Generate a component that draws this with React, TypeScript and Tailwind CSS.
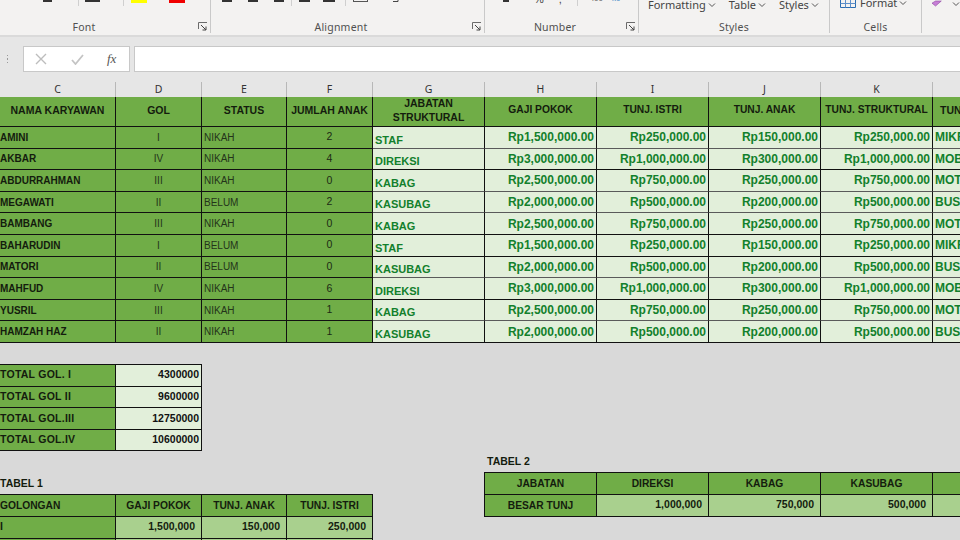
import React from "react";

const font = "font-['Liberation_Sans',Arial,sans-serif]";
const uiFont = "font-['Noto_Sans',sans-serif]";

const rows = [
  ["AMINI", "I", "NIKAH", "2", "STAF", "Rp1,500,000.00", "Rp250,000.00", "Rp150,000.00", "Rp250,000.00", "MIKR"],
  ["AKBAR", "IV", "NIKAH", "4", "DIREKSI", "Rp3,000,000.00", "Rp1,000,000.00", "Rp300,000.00", "Rp1,000,000.00", "MOB"],
  ["ABDURRAHMAN", "III", "NIKAH", "0", "KABAG", "Rp2,500,000.00", "Rp750,000.00", "Rp250,000.00", "Rp750,000.00", "MOT"],
  ["MEGAWATI", "II", "BELUM", "2", "KASUBAG", "Rp2,000,000.00", "Rp500,000.00", "Rp200,000.00", "Rp500,000.00", "BUS"],
  ["BAMBANG", "III", "NIKAH", "0", "KABAG", "Rp2,500,000.00", "Rp750,000.00", "Rp250,000.00", "Rp750,000.00", "MOT"],
  ["BAHARUDIN", "I", "BELUM", "0", "STAF", "Rp1,500,000.00", "Rp250,000.00", "Rp150,000.00", "Rp250,000.00", "MIKR"],
  ["MATORI", "II", "BELUM", "0", "KASUBAG", "Rp2,000,000.00", "Rp500,000.00", "Rp200,000.00", "Rp500,000.00", "BUS"],
  ["MAHFUD", "IV", "NIKAH", "6", "DIREKSI", "Rp3,000,000.00", "Rp1,000,000.00", "Rp300,000.00", "Rp1,000,000.00", "MOB"],
  ["YUSRIL", "III", "NIKAH", "1", "KABAG", "Rp2,500,000.00", "Rp750,000.00", "Rp250,000.00", "Rp750,000.00", "MOT"],
  ["HAMZAH HAZ", "II", "NIKAH", "1", "KASUBAG", "Rp2,000,000.00", "Rp500,000.00", "Rp200,000.00", "Rp500,000.00", "BUS"],
];

const grayRows = [0, 2, 3, 6, 8];
const letters = ["C", "D", "E", "F", "G", "H", "I", "J", "K"];
const colsClass = "grid grid-cols-[116px_86px_85px_86px_112px_112px_112px_112px_112px_112px]";

function Launcher() {
  return (
    <svg width="10" height="10" viewBox="0 0 10 10" fill="none" stroke="#6b6b6b" strokeWidth="1">
      <path d="M0.5 7V0.5H9" />
      <path d="M3 3l5 5M8 4.5V8H4.5" stroke="#444" />
    </svg>
  );
}

function Chevron() {
  return (
    <svg width="8" height="6" viewBox="0 0 8 6" fill="none" stroke="#555" strokeWidth="1" className="shrink-0">
      <path d="M1 1.5l3 3 3-3" />
    </svg>
  );
}

function Mark({ w, ml, h = "h-[2px]", c = "bg-[#333]" }: { w: string; ml: string; h?: string; c?: string }) {
  return <span className={`block ${w} ${ml} ${h} ${c}`} />;
}

function Sep({ ml }: { ml: string }) {
  return <span className={`block w-px h-[6px] bg-[#cfcfcf] ${ml}`} />;
}

function Group({
  label,
  width,
  launcher,
  extra,
  children,
}: {
  label: string;
  width: string;
  launcher?: boolean;
  extra?: string;
  children: React.ReactNode;
}) {
  return (
    <div className={`${width} h-[33px] shrink-0 flex flex-col border-r border-[#c9c9c9]`}>
      <div className="h-[21px] flex items-start overflow-hidden">{children}</div>
      <div className="flex-1 flex items-center">
        <div className={`flex-1 text-center text-[10.5px] leading-[12px] tracking-[0.2px] text-[#505050] ${uiFont} ${extra ?? ""}`}>
          {label}
        </div>
        {launcher ? (
          <div className="mr-[2px] w-[10px] flex">
            <Launcher />
          </div>
        ) : null}
      </div>
    </div>
  );
}

function Ribbon() {
  return (
    <div className="h-[35px] shrink-0 bg-[#f3f2f1] flex overflow-hidden">
      <Group label="Font" width="w-[211px]" launcher extra="pr-[30px]">
        <Mark w="w-[9px]" ml="ml-[43px]" />
        <Sep ml="ml-[26px]" />
        <Mark w="w-[15px]" ml="ml-[6px]" />
        <Sep ml="ml-[23px]" />
        <Mark w="w-[16px]" ml="ml-[7px]" h="h-[3px]" c="bg-[#ffff00]" />
        <Mark w="w-[16px]" ml="ml-[22px]" h="h-[3px]" c="bg-[#f00000]" />
      </Group>
      <Group label="Alignment" width="w-[274px]" launcher extra="pr-[1px]">
        <Mark w="w-[10px]" ml="ml-[11px]" />
        <Mark w="w-[10px]" ml="ml-[16px]" />
        <Mark w="w-[10px]" ml="ml-[16px]" />
        <Sep ml="ml-[7px]" />
        <Mark w="w-[11px]" ml="ml-[7px]" />
        <Mark w="w-[12px]" ml="ml-[13px]" />
        <Sep ml="ml-[10px]" />
        <span className="block ml-[7px] w-[15px] h-[2px] border-x border-b border-[#555]" />
        <svg width="6" height="3" viewBox="0 0 6 3" fill="none" stroke="#444" className="ml-[25px]">
          <path d="M5 0v1.5H0" />
        </svg>
      </Group>
      <Group label="Number" width="w-[154px]" launcher extra="pr-[1px]">
        <Mark w="w-[6px]" ml="ml-[18px]" h="h-[2px]" />
        <span className={`ml-[25px] -mt-[6px] text-[11px] leading-[11px] text-[#444] ${font}`}>%</span>
        <span className={`ml-[15px] -mt-[6px] text-[11px] leading-[11px] text-[#444] ${font}`}>,</span>
        <Sep ml="ml-[15px]" />
        <span className={`ml-[14px] -mt-[6px] text-[8px] leading-[9px] text-[#555] ${font}`}>.00</span>
        <span className={`ml-[9px] -mt-[6px] text-[8px] leading-[9px] text-[#3b83c6] ${font}`}>x0</span>
      </Group>
      <Group label="Styles" width="w-[191px]">
        <div className={`-mt-[1px] flex items-center text-[11px] leading-[11px] text-[#444] ${uiFont}`}>
          <span className="ml-[9px]">Formatting</span>
          <span className="ml-[2px]">
            <Chevron />
          </span>
          <span className="ml-[13px]">Table</span>
          <span className="ml-[2px]">
            <Chevron />
          </span>
          <span className="ml-[13px]">Styles</span>
          <span className="ml-[2px]">
            <Chevron />
          </span>
        </div>
      </Group>
      <Group label="Cells" width="w-[92px]">
        <svg width="16" height="8" viewBox="0 0 16 8" fill="none" className="ml-[10px]">
          <path d="M0.5 0v7.5h15V0" stroke="#2b6cb0" />
          <path d="M5.5 0v7.5M10.5 0v7.5M0.5 3.5h15" stroke="#5d8fc9" />
        </svg>
        <div className={`-mt-[3px] flex items-center text-[11px] leading-[11px] text-[#444] ${uiFont}`}>
          <span className="ml-[4px]">Format</span>
          <span className="ml-[2px]">
            <Chevron />
          </span>
        </div>
      </Group>
      <div className="flex-1 flex items-start overflow-hidden">
        <svg width="14" height="7" viewBox="0 0 14 7" className="ml-[10px]">
          <path d="M0 3L5 7L13 0H5Z" fill="#c77fd6" stroke="#8a3f9e" strokeWidth="0.8" />
        </svg>
        <span className="ml-[10px] mt-[1px]">
          <Chevron />
        </span>
      </div>
    </div>
  );
}

function FormulaBar() {
  return (
    <div className="h-[47px] shrink-0 pt-[9px] pb-[10px] border-t-[2px] border-[#dadada] bg-[#e6e6e6] flex items-stretch">
      <div className="w-[23px] flex flex-col items-center justify-center gap-[2px] pr-[8px]">
        <span className="size-[1.5px] bg-[#9a9a9a]" />
        <span className="size-[1.5px] bg-[#9a9a9a]" />
        <span className="size-[1.5px] bg-[#9a9a9a]" />
      </div>
      <div className="w-[107px] bg-white border border-[#c8c8c8] flex items-center">
        <svg width="12" height="12" viewBox="0 0 12 12" fill="none" stroke="#bdbdbd" strokeWidth="1.4" className="ml-[11px]">
          <path d="M1 1l10 10M11 1L1 11" />
        </svg>
        <svg width="13" height="11" viewBox="0 0 13 11" fill="none" stroke="#c4c4c4" strokeWidth="1.8" className="ml-[24px]">
          <path d="M1 6l3.5 4L12 1" />
        </svg>
        <span className="ml-[23px] font-['Liberation_Serif',serif] italic text-[13px] leading-[14px] text-[#555]">
          fx
        </span>
      </div>
      <div className="ml-[4px] flex-1 bg-white border-y border-l border-[#c8c8c8]" />
    </div>
  );
}

function ColumnLetters() {
  return (
    <div className={`${colsClass} h-[15px] shrink-0 bg-[#e6e6e6]`}>
      {letters.map((l) => (
        <div
          key={l}
          className={`border-r border-[#b8b8b8] text-center text-[10.5px] leading-[15px] text-[#333] ${uiFont}`}
        >
          {l}
        </div>
      ))}
      <div />
    </div>
  );
}

const headerCell = "border-r border-b border-[#111] bg-[#70ad47] flex items-center justify-center text-center pb-[4px] leading-[14px] font-bold text-[#141c0e]";

function MainTable() {
  const headers = ["NAMA KARYAWAN", "GOL", "STATUS", "JUMLAH ANAK", "JABATAN STRUKTURAL", "GAJI POKOK", "TUNJ. ISTRI", "TUNJ. ANAK", "TUNJ. STRUKTURAL"];
  return (
    <div className={`${colsClass} shrink-0 grid-rows-[30px_repeat(10,21.6px)] ${font}`}>
      {headers.map((h, i) => (
        <div key={h} className={`${headerCell} ${i >= 5 ? "text-[10.25px]" : "text-[10.5px]"} ${i === 4 ? "px-[12px]" : ""}`}>
          {h}
        </div>
      ))}
      <div className={`${headerCell} text-[10.5px] !justify-start pl-[7px]`}>TUN</div>
      {rows.map((r, idx) => {
        const light = grayRows.includes(idx) ? "border-b-[#5a5a5a]" : "border-b-[#111]";
        return (
          <React.Fragment key={r[0]}>
            <div className="border-r border-b border-[#111] bg-[#70ad47] flex items-center text-[10px] font-bold text-[#141c0e]">{r[0]}</div>
            <div className="border-r border-b border-[#111] bg-[#70ad47] flex items-center justify-center text-[10px] text-[#24341a]">{r[1]}</div>
            <div className="border-r border-b border-[#111] bg-[#70ad47] flex items-center pl-[2px] text-[10px] text-[#24341a]">{r[2]}</div>
            <div className="border-r border-b border-[#111] bg-[#70ad47] flex items-center justify-center text-[10.5px] text-[#1c2a14]">{r[3]}</div>
            <div className={`border-r border-b border-[#111] ${light} bg-[#e2efda] flex items-end pl-[2px] pb-[1px] text-[11px] leading-[14px] font-bold text-[#12802c]`}>{r[4]}</div>
            {r.slice(5, 9).map((v, i) => (
              <div key={i} className={`border-r border-b border-[#111] ${light} bg-[#e2efda] flex items-center justify-end pr-[2px] text-[12px] font-bold text-[#12802c]`}>
                {v}
              </div>
            ))}
            <div className={`border-b ${light} bg-[#e2efda] flex items-center pl-[2px] text-[12px] font-bold text-[#12802c]`}>{r[9]}</div>
          </React.Fragment>
        );
      })}
    </div>
  );
}

function Totals() {
  const t = [
    ["TOTAL GOL. I", "4300000"],
    ["TOTAL GOL II", "9600000"],
    ["TOTAL GOL.III", "12750000"],
    ["TOTAL GOL.IV", "10600000"],
  ];
  return (
    <div className="w-[202px] grid grid-cols-[116px_86px] auto-rows-[21.6px] border-t border-[#111]">
      {t.map(([a, b]) => (
        <React.Fragment key={a}>
          <div className="border-r border-b border-[#111] bg-[#70ad47] flex items-center text-[10.5px] tracking-[0.25px] font-bold text-[#141c0e]">{a}</div>
          <div className="border-r border-b border-[#111] bg-[#e2efda] flex items-center justify-end pr-[2px] text-[10.5px] font-bold text-[#111]">{b}</div>
        </React.Fragment>
      ))}
    </div>
  );
}

function Tabel1() {
  const data = [["I", "1,500,000", "150,000", "250,000"], ["", "", "", ""]];
  const heads = ["GOLONGAN", "GAJI POKOK", "TUNJ. ANAK", "TUNJ. ISTRI"];
  return (
    <div className="w-[373px] grid grid-cols-[116px_86px_85px_86px] grid-rows-[21.6px_21.6px_21.6px] border-t border-[#111]">
      {heads.map((h, i) => (
        <div key={h} className={`border-r border-b border-[#111] bg-[#70ad47] flex items-center text-[10.25px] font-bold text-[#141c0e] ${i === 0 ? "" : "justify-center"}`}>
          {h}
        </div>
      ))}
      {data.map((r, ri) => (
        <React.Fragment key={ri}>
          <div className="border-r border-b border-[#111] bg-[#70ad47] flex items-center text-[10.5px] font-bold text-[#141c0e]">{r[0]}</div>
          {r.slice(1).map((v, i) => (
            <div key={i} className="border-r border-b border-[#111] bg-[#a9d08e] flex items-center justify-end pr-[6px] text-[10.5px] font-bold text-[#141c0e]">
              {v}
            </div>
          ))}
        </React.Fragment>
      ))}
    </div>
  );
}

function Tabel2() {
  const heads = ["JABATAN", "DIREKSI", "KABAG", "KASUBAG", ""];
  const vals = ["1,000,000", "750,000", "500,000", ""];
  return (
    <div className="w-[560px] grid grid-cols-[112px_112px_112px_112px_111px] grid-rows-[22px_21.6px] border-t border-l border-[#111]">
      {heads.map((h, i) => (
        <div key={i} className="border-r border-b border-[#111] bg-[#70ad47] flex items-center justify-center text-[10.25px] font-bold text-[#141c0e]">
          {h}
        </div>
      ))}
      <div className="border-r border-b border-[#111] bg-[#70ad47] flex items-center justify-center text-[10.25px] font-bold text-[#141c0e]">BESAR TUNJ</div>
      {vals.map((v, i) => (
        <div key={i} className="border-r border-b border-[#111] bg-[#a9d08e] flex items-center justify-end pr-[6px] text-[10.5px] font-bold text-[#141c0e]">
          {v}
        </div>
      ))}
    </div>
  );
}

export default function App() {
  return (
    <div className="w-[960px] h-[540px] overflow-hidden bg-[#d9d9d9] flex flex-col">
      <Ribbon />
      <FormulaBar />
      <ColumnLetters />
      <MainTable />
      <div className={`flex shrink-0 ${font}`}>
        <div className="w-[484px] shrink-0 pt-[21px]">
          <Totals />
          <div className="h-[43px] flex items-end pb-[5px] text-[10.5px] leading-[12px] font-bold text-[#141c0e]">TABEL 1</div>
          <Tabel1 />
        </div>
        <div className="shrink-0 pt-[107px]">
          <div className="h-[22px] flex items-end pb-[5px] pl-[3px] text-[10.5px] leading-[12px] font-bold text-[#141c0e]">TABEL 2</div>
          <Tabel2 />
        </div>
      </div>
    </div>
  );
}
